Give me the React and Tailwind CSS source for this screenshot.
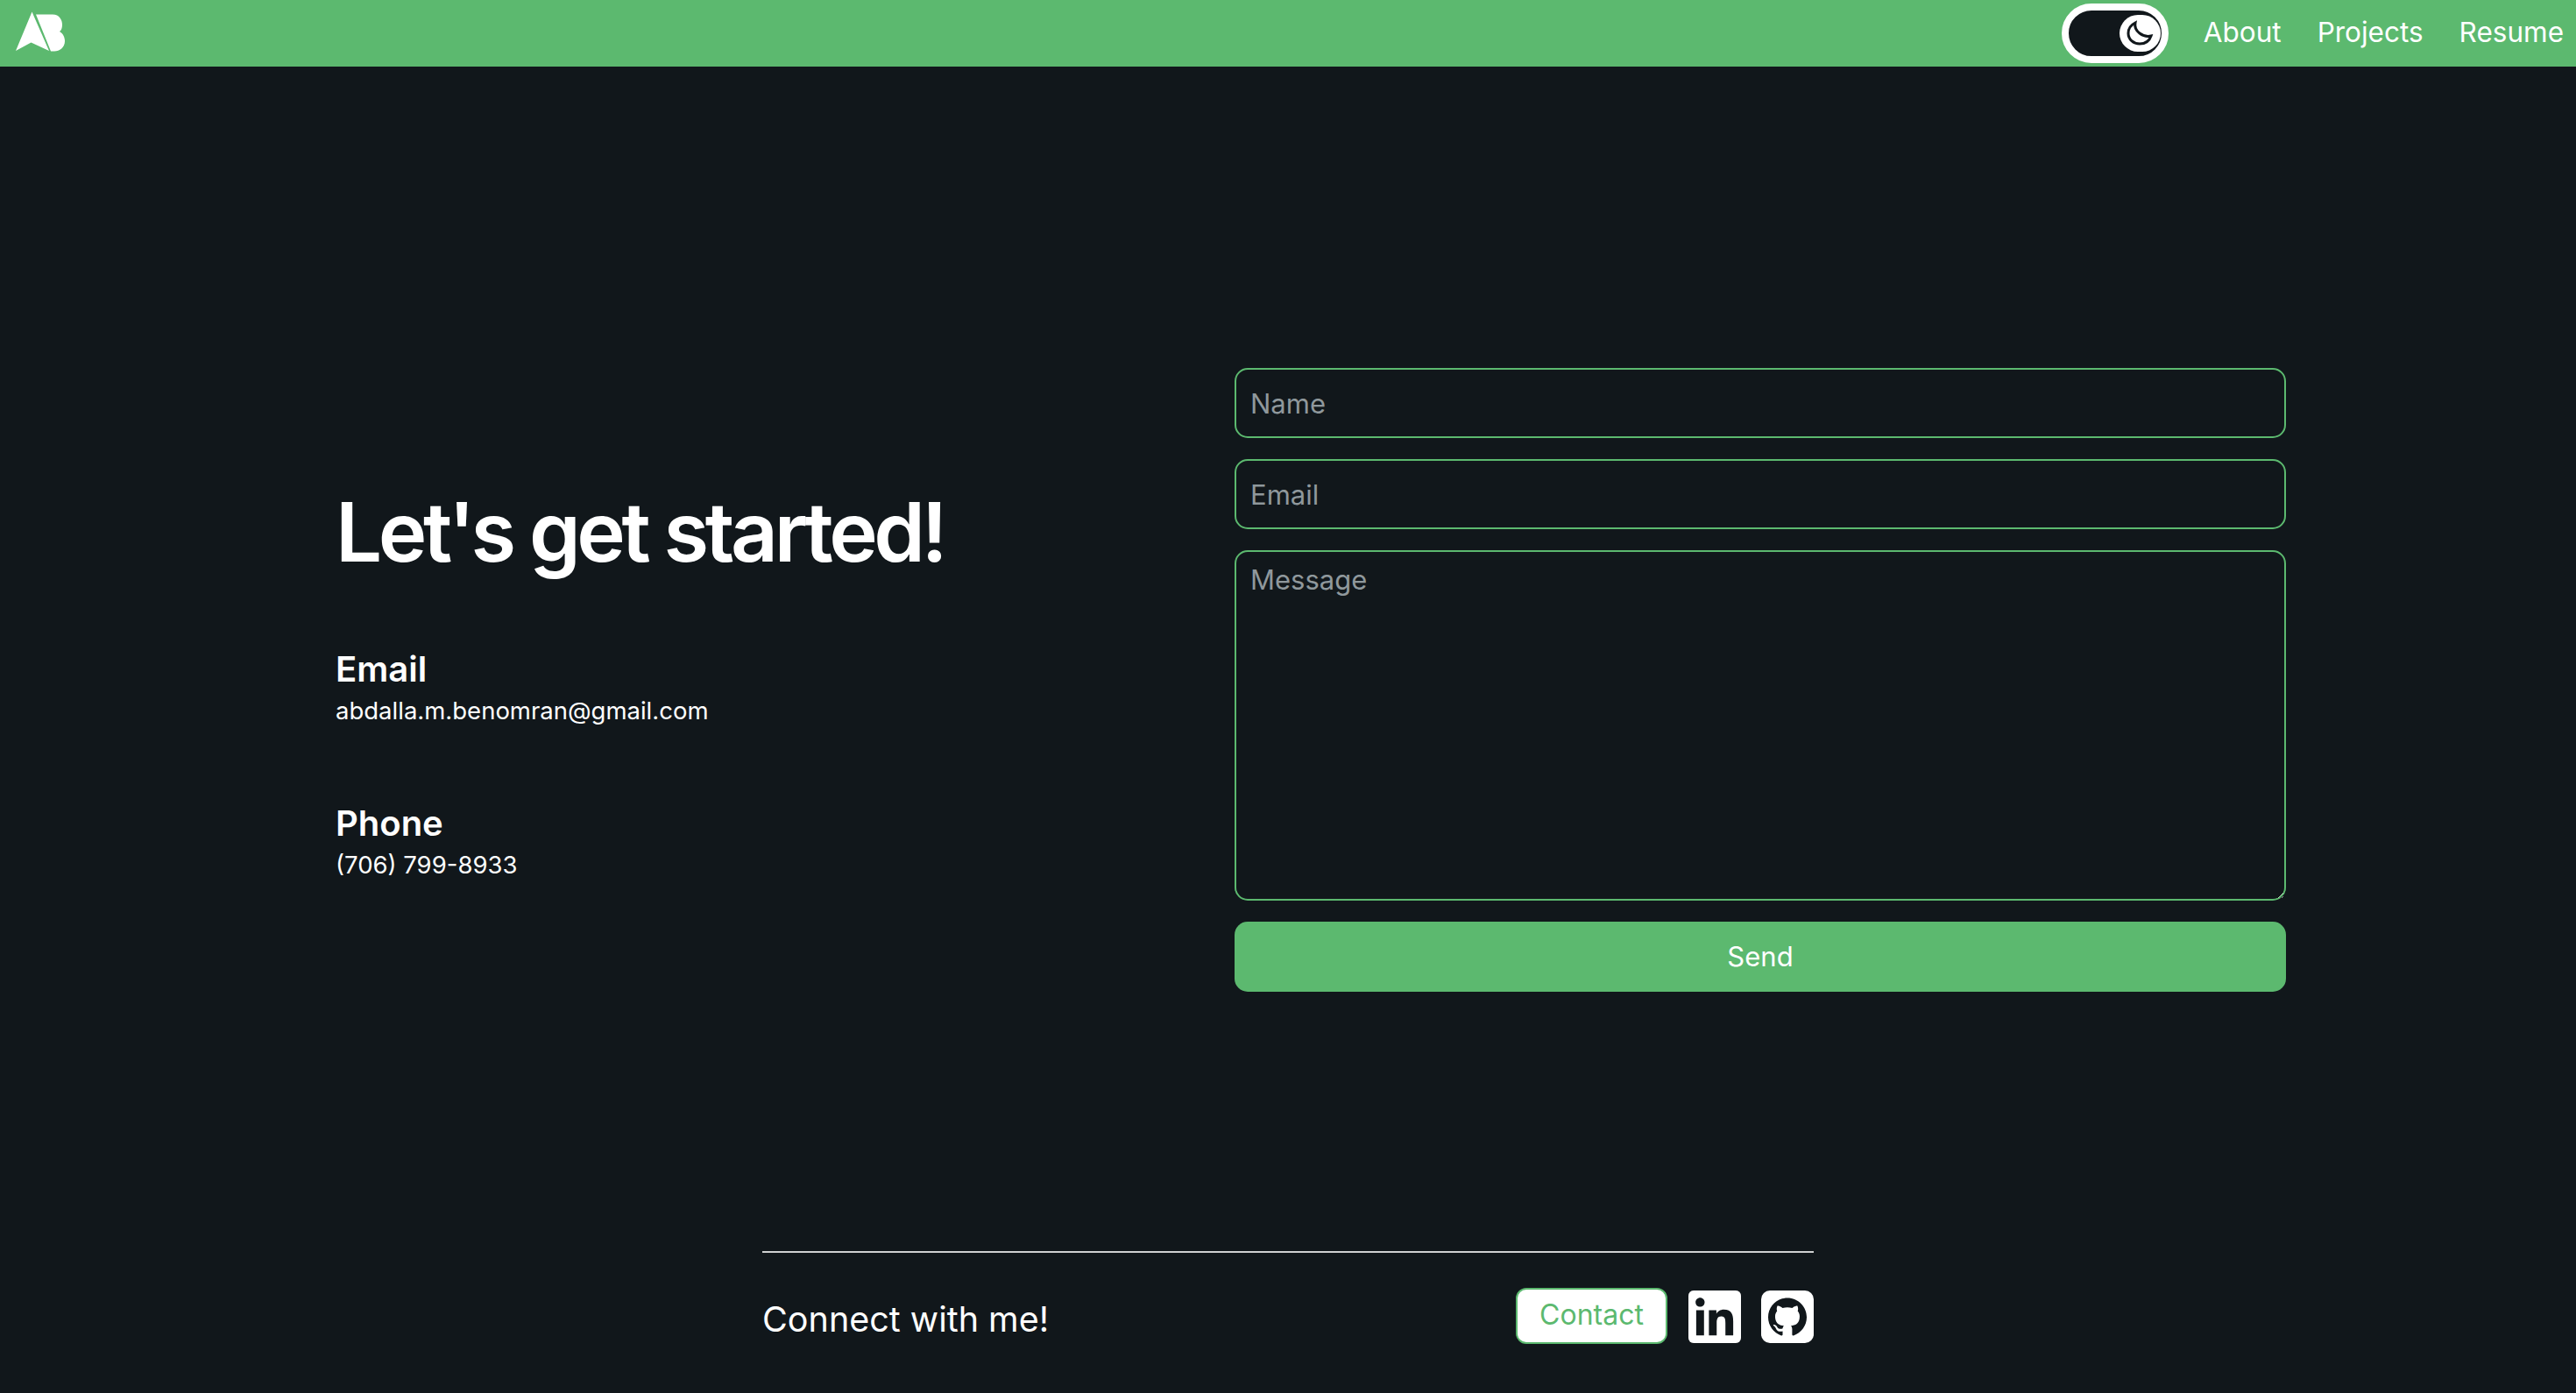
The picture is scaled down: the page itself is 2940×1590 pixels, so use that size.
import { SiGithub, SiLinkedin } from "react-icons/si";

const font = "font-['Inter','Liberation_Sans',sans-serif]";

function Logo() {
  return (
    <svg width="62" height="62" viewBox="16 6 62 62" className="block">
      <polygon points="36.5,12.5 18,57 35.5,47.5 56,57" fill="#fff" />
      <path d="M41,15.5 H60 C68,15.5 71,22 71,27 C71,31 70,33.5 68,35 C72,37 74,42 74,46 C74,53 68,57.5 62,57.5 H58 Z" fill="#fff" />
    </svg>
  );
}

function ThemeToggle() {
  return (
    <div className="w-[122px] h-[68px] rounded-full border-[8px] border-white bg-[#11171b] flex items-center justify-end pr-[1px]">
      <div className="w-[47px] h-[42px] rounded-full bg-white flex items-center justify-center">
        <svg width="32" height="30" viewBox="0 0 32 30" fill="none" stroke="#11171b" strokeWidth="3">
          <path d="M11 3 C5 6 3 11 3 15 C3 22 9 27 16 27 C22 27 27 24 29 18 C25 19 20 18 16 15 C12 12 10 8 11 3 Z" />
        </svg>
      </div>
    </div>
  );
}

function Info({ label, value }) {
  return (
    <div>
      <h2 className="text-[40px] leading-[52px] font-semibold text-white">{label}</h2>
      <p className="text-[27.5px] leading-[42px] text-white">{value}</p>
    </div>
  );
}

export default function App() {
  const fieldClass =
    "w-full bg-transparent border-2 border-[#5cb96f] rounded-[15px] px-[16px] text-[31px] text-white outline-none placeholder:text-[#8f989c]";

  return (
    <div className={`min-h-screen bg-[#11171b] flex flex-col ${font}`}>
      <nav className="h-[76px] bg-[#5cb96f] flex items-center pl-[16px] pr-[14px]">
        <Logo />
        <div className="ml-auto flex items-center">
          <ThemeToggle />
          <a className="ml-[40px] pb-[2px] text-[31.5px] text-white">About</a>
          <a className="ml-[41px] pb-[2px] text-[31.5px] text-white">Projects</a>
          <a className="ml-[41px] pb-[2px] text-[31.5px] text-white">Resume</a>
        </div>
      </nav>

      <main className="pt-[344px] pl-[383px] pr-[331px] flex items-center justify-between">
        <div>
          <h1 className="pt-[2px] text-[94px] leading-[120px] font-semibold text-white tracking-[-4.4px]">Let's get started!</h1>
          <div className="mt-[71px] flex flex-col gap-[82px]">
            <Info label="Email" value="abdalla.m.benomran@gmail.com" />
            <Info label="Phone" value="(706) 799-8933" />
          </div>
        </div>

        <form className="w-[1200px] flex flex-col gap-[24px]">
          <input className={`${fieldClass} h-[80px]`} placeholder="Name" />
          <input className={`${fieldClass} h-[80px]`} placeholder="Email" />
          <textarea className={`${fieldClass} h-[400px] py-[9px] block`} placeholder="Message" />
          <button type="button" className="h-[80px] bg-[#5cb96f] rounded-[15px] text-[31px] text-white">
            Send
          </button>
        </form>
      </main>

      <footer className="w-[1200px] mx-auto mt-[296px] border-t-2 border-white/80 pt-[40px] flex items-center">
        <span className="pt-[7px] text-[39.5px] text-white">Connect with me!</span>
        <button type="button" className="ml-auto mb-[2px] h-[64px] w-[173px] pb-[3px] bg-white border-2 border-[#5cb96f] rounded-[12px] text-[32px] text-[#5cb96f]">
          Contact
        </button>
        <div className="ml-[24px] w-[60px] h-[60px] rounded-[6px] bg-white overflow-hidden">
          <SiLinkedin className="w-[60px] h-[60px] text-white bg-[#11171b]" />
        </div>
        <div className="ml-[23px] w-[60px] h-[60px] rounded-[10px] bg-white flex items-center justify-center">
          <SiGithub className="w-[44px] h-[44px] text-[#11171b]" />
        </div>
      </footer>
    </div>
  );
}
